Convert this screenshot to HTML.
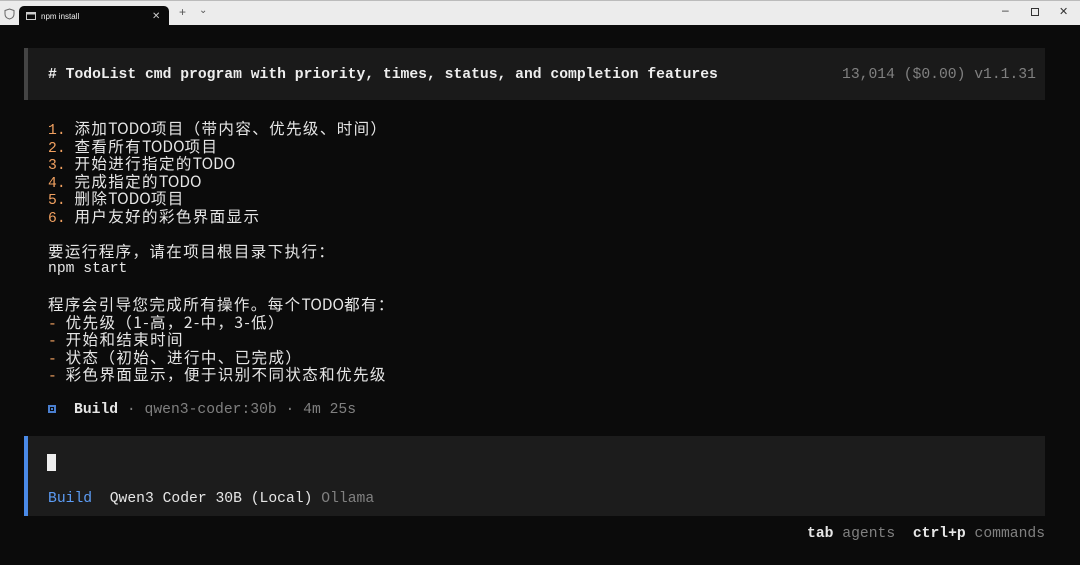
<!DOCTYPE html>
<html><head><meta charset="utf-8"><style>
*{margin:0;padding:0;box-sizing:border-box}
html{width:1080px;height:565px;overflow:hidden}
body{width:1080px;height:565px;background:#0b0b0b;overflow:hidden;position:relative;font-family:"Liberation Mono","Noto Sans CJK SC",monospace;font-size:14.7px;color:#e6e6e6}
.tb{position:absolute;left:0;top:0;width:1080px;height:25px;background:#ececec;border-top:1px solid #bbb}
.tab{position:absolute;left:19px;top:5px;width:150px;height:21px;background:#0b0b0b;border-radius:5px 5px 0 0;color:#eee;font-family:"Liberation Sans",sans-serif;font-size:8px;line-height:21px;padding-left:22px}
.abs{position:absolute;white-space:pre}
.c{font-family:"Noto Sans CJK SC",sans-serif;letter-spacing:1.4px;font-size:15.5px;line-height:17.6px}
.t{font-family:"Noto Sans CJK SC",sans-serif;font-size:15.5px;letter-spacing:0}
.o{color:#f0a060}
.g{color:#808080}
.b{color:#5c9cf5}
.blk{position:absolute;white-space:normal}
.blk div{height:17.6px;line-height:17.6px;white-space:pre;overflow:visible}
</style></head><body>
<div class="tb">
<svg class="abs" style="left:4px;top:7px" width="11" height="12" viewBox="0 0 11 12"><path d="M5.5 1 L10 2.5 V6 C10 9 7.5 10.5 5.5 11 C3.5 10.5 1 9 1 6 V2.5 Z" fill="none" stroke="#666" stroke-width="1"/></svg>
<div class="tab">npm install
<svg class="abs" style="left:7px;top:6px" width="10" height="8"><rect x="0.5" y="0.5" width="9" height="7" fill="none" stroke="#ccc"/><rect x="1" y="1" width="8" height="1.5" fill="#ccc"/></svg>
<span class="abs" style="left:133px;top:0;font-size:10px;color:#ccc">✕</span></div>
<span class="abs" style="left:179px;top:4px;font-size:12px;color:#555;font-family:'Liberation Sans'">+</span>
<span class="abs" style="left:199px;top:4px;font-size:10px;color:#555;font-family:'Liberation Sans'">⌄</span>
<span class="abs" style="left:1002px;top:2px;font-size:12px;color:#333;font-family:'Liberation Sans'">–</span>
<span class="abs" style="left:1031px;top:7px;width:8px;height:8px;border:1px solid #333"></span>
<span class="abs" style="left:1059px;top:4px;font-size:11px;color:#333;font-family:'Liberation Sans'">✕</span>
</div>
<div class="abs" style="left:24px;top:48px;width:1021px;height:52px;background:#1a1a1a;border-left:4px solid #444"></div>
<div class="abs" style="left:48px;top:67px;font-weight:bold;color:#eee"># TodoList cmd program with priority, times, status, and completion features</div>
<div class="abs g" style="left:842px;top:67px">13,014 ($0.00) v1.1.31</div>
<div class="blk" style="left:48px;top:120px"><div><span class="o">1. </span><span class="c">添加<span class="t">TODO</span>项目（带内容、优先级、时间）</span></div><div><span class="o">2. </span><span class="c">查看所有<span class="t">TODO</span>项目</span></div><div><span class="o">3. </span><span class="c">开始进行指定的<span class="t">TODO</span></span></div><div><span class="o">4. </span><span class="c">完成指定的<span class="t">TODO</span></span></div><div><span class="o">5. </span><span class="c">删除<span class="t">TODO</span>项目</span></div><div><span class="o">6. </span><span class="c">用户友好的彩色界面显示</span></div><div></div><div><span class="c">要运行程序，请在项目根目录下执行：</span></div><div>npm start</div><div></div><div><span class="c">程序会引导您完成所有操作。每个<span class="t">TODO</span>都有：</span></div><div><span class="o">- </span><span class="c">优先级（1-高，2-中，3-低）</span></div><div><span class="o">- </span><span class="c">开始和结束时间</span></div><div><span class="o">- </span><span class="c">状态（初始、进行中、已完成）</span></div><div><span class="o">- </span><span class="c">彩色界面显示，便于识别不同状态和优先级</span></div></div>
<div class="abs" style="left:48px;top:405px;width:8px;height:8px;border:2px solid #4a7fd0"></div>
<div class="abs" style="left:51px;top:408px;width:2px;height:2px;background:#4a7fd0"></div>
<div class="abs" style="left:74px;top:402px"><b>Build</b><span class="g"> · qwen3-coder:30b · 4m 25s</span></div>
<div class="abs" style="left:24px;top:436px;width:1021px;height:80px;background:#1c1c1c;border-left:4px solid #4a8ae8"></div>
<div class="abs" style="left:47px;top:454px;width:9px;height:17px;background:#eee"></div>
<div class="abs" style="left:48px;top:491px"><span class="b">Build</span>  Qwen3 Coder 30B (Local) <span class="g">Ollama</span></div>
<div class="abs" style="left:807px;top:526px"><b>tab</b> <span class="g">agents</span>  <b>ctrl+p</b> <span class="g">commands</span></div>
</body></html>
